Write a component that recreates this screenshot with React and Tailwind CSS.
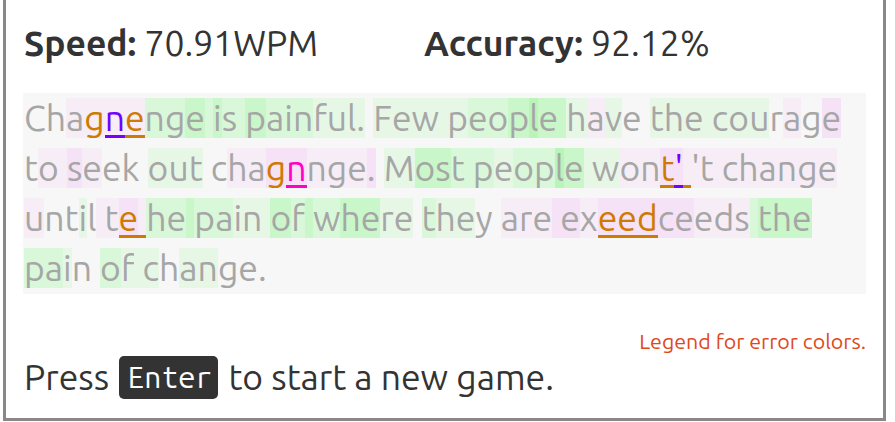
const BG = {
  ".": "",
  a: "bg-[#e6f7e6]",
  b: "bg-[#d9f8d9]",
  c: "bg-[#c9f7c9]",
  d: "bg-[#b9f4b9]",
  p: "bg-[#f7edf7]",
  q: "bg-[#f6e2f6]",
};

const FG = {
  ".": "text-[#a6a6a6]",
  o: "text-[#cf7a00]",
  O: "text-[#cf7a00] shadow-[inset_0_-3px_0_0_#cf7a00]",
  v: "text-[#7400ff] shadow-[inset_0_-3px_0_0_#7400ff]",
  m: "text-[#ff00c4] shadow-[inset_0_-3px_0_0_#ff00c4]",
  _: "text-[#a6a6a6] shadow-[inset_0_-3px_0_0_#cf7a00]",
};

const lines = [
  {
    text: "Chagnenge is painful. Few people have the courage",
    bg: "..ppppbbcbcbbcbbbaaaa.aaaaabbcdccapa..aaaaaaa.p.q",
    fg: "...ovO",
  },
  {
    text: "to seek out chagnnge. Most people wont' 't change",
    bg: ".ppqp...aaa..ppqqpppq.accbbbabbdcaappqqpppppppppp",
    fg: "...............om....................Ov_",
  },
  {
    text: "until te he pain of where they are exeedceeds the",
    bg: "p..a.ppqpbbcbbaaacbcbccaa.baa..pppqqpqqqqqpppbccc",
    fg: ".......O_............................OOO",
  },
  {
    text: "pain of change.",
    bg: "bba..baaa.aa...",
    fg: "",
  },
];

function TypedLine({ line }) {
  return (
    <div className="h-[40px] whitespace-nowrap">
      {line.text.split("").map((ch, i) => (
        <span
          key={i}
          className={`inline-block h-[40px] leading-[40px] align-top whitespace-pre ${BG[line.bg[i] || "."]} ${FG[line.fg[i] || "."]}`}
        >
          {ch}
        </span>
      ))}
    </div>
  );
}

export default function App() {
  return (
    <div className="w-[895px] h-[422px] bg-white font-['Ubuntu','Open_Sans',sans-serif]">
      <div className="ml-[3px] w-[883px] h-[421px] border-x-[3px] border-b-[3px] border-[#888888] px-[17px] flex flex-col">
        <div className="flex pt-[23px] h-[93px] text-[35.5px] leading-[40px] text-[#333333]">
          <div className="w-[401px] pl-[1px]">
            <span className="font-bold">Speed:</span> 70.91WPM
          </div>
          <div>
            <span className="font-bold">Accuracy:</span> 92.12%
          </div>
        </div>

        <div className="bg-[#f7f7f7] pt-[5px] pb-[6px] pl-[1px] flex flex-col gap-[10px] text-[35.5px]">
          {lines.map((line, i) => (
            <TypedLine key={i} line={line} />
          ))}
        </div>

        <div className="mt-[34px] text-right text-[21.4px] leading-[26px] text-[#e0481b]">
          Legend for error colors.
        </div>

        <div className="mt-[1px] pl-[1px] flex items-center gap-[10px] text-[35.5px] leading-[44px] text-[#333333]">
          <span>Press</span>
          <kbd className="bg-[#333333] text-white rounded-[5px] pl-[8px] pr-[6px] h-[43px] leading-[43px] font-['Ubuntu_Mono','Liberation_Mono',monospace] text-[30.5px]">
            Enter
          </kbd>
          <span>to start a new game.</span>
        </div>
      </div>
    </div>
  );
}
